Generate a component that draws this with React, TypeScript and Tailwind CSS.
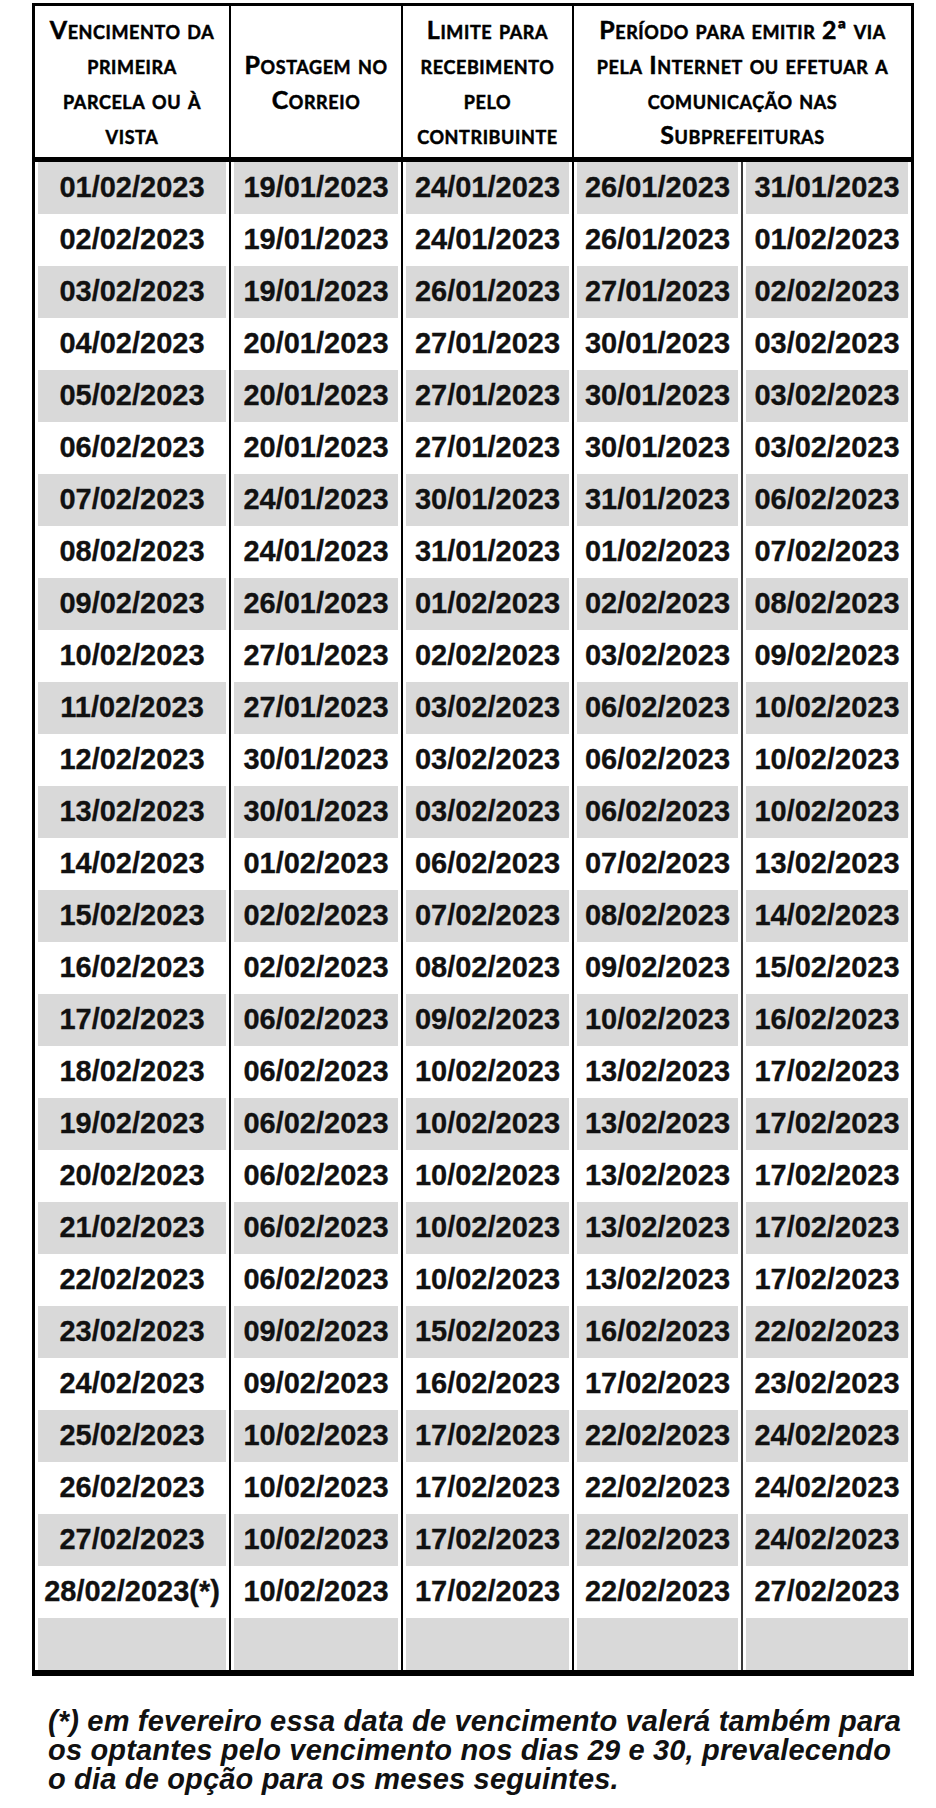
const rows: string[][] = [
  ["01/02/2023", "19/01/2023", "24/01/2023", "26/01/2023", "31/01/2023"],
  ["02/02/2023", "19/01/2023", "24/01/2023", "26/01/2023", "01/02/2023"],
  ["03/02/2023", "19/01/2023", "26/01/2023", "27/01/2023", "02/02/2023"],
  ["04/02/2023", "20/01/2023", "27/01/2023", "30/01/2023", "03/02/2023"],
  ["05/02/2023", "20/01/2023", "27/01/2023", "30/01/2023", "03/02/2023"],
  ["06/02/2023", "20/01/2023", "27/01/2023", "30/01/2023", "03/02/2023"],
  ["07/02/2023", "24/01/2023", "30/01/2023", "31/01/2023", "06/02/2023"],
  ["08/02/2023", "24/01/2023", "31/01/2023", "01/02/2023", "07/02/2023"],
  ["09/02/2023", "26/01/2023", "01/02/2023", "02/02/2023", "08/02/2023"],
  ["10/02/2023", "27/01/2023", "02/02/2023", "03/02/2023", "09/02/2023"],
  ["11/02/2023", "27/01/2023", "03/02/2023", "06/02/2023", "10/02/2023"],
  ["12/02/2023", "30/01/2023", "03/02/2023", "06/02/2023", "10/02/2023"],
  ["13/02/2023", "30/01/2023", "03/02/2023", "06/02/2023", "10/02/2023"],
  ["14/02/2023", "01/02/2023", "06/02/2023", "07/02/2023", "13/02/2023"],
  ["15/02/2023", "02/02/2023", "07/02/2023", "08/02/2023", "14/02/2023"],
  ["16/02/2023", "02/02/2023", "08/02/2023", "09/02/2023", "15/02/2023"],
  ["17/02/2023", "06/02/2023", "09/02/2023", "10/02/2023", "16/02/2023"],
  ["18/02/2023", "06/02/2023", "10/02/2023", "13/02/2023", "17/02/2023"],
  ["19/02/2023", "06/02/2023", "10/02/2023", "13/02/2023", "17/02/2023"],
  ["20/02/2023", "06/02/2023", "10/02/2023", "13/02/2023", "17/02/2023"],
  ["21/02/2023", "06/02/2023", "10/02/2023", "13/02/2023", "17/02/2023"],
  ["22/02/2023", "06/02/2023", "10/02/2023", "13/02/2023", "17/02/2023"],
  ["23/02/2023", "09/02/2023", "15/02/2023", "16/02/2023", "22/02/2023"],
  ["24/02/2023", "09/02/2023", "16/02/2023", "17/02/2023", "23/02/2023"],
  ["25/02/2023", "10/02/2023", "17/02/2023", "22/02/2023", "24/02/2023"],
  ["26/02/2023", "10/02/2023", "17/02/2023", "22/02/2023", "24/02/2023"],
  ["27/02/2023", "10/02/2023", "17/02/2023", "22/02/2023", "24/02/2023"],
  ["28/02/2023(*)", "10/02/2023", "17/02/2023", "22/02/2023", "27/02/2023"],
  ["", "", "", "", ""],
];

// larguras já contando a linha divisória à direita de cada coluna
const cellClasses = [
  "w-[196px] border-r-2 border-black",
  "w-[172px] border-r-2 border-black",
  "w-[171px] border-r-2 border-black",
  "w-[169px] border-r-2 border-[#3a3a3a]",
  "w-[168px]",
];

const headClass =
  "flex items-center justify-center text-center font-['Lato',sans-serif] font-bold text-[25px] leading-[35px] tracking-[0.6px] [font-variant:small-caps] [-webkit-text-stroke:0.5px_black] text-black whitespace-nowrap";

export default function App() {
  return (
    <div className="min-h-[1808px] bg-white pt-[3px]">
      <div className="ml-[32px] w-[882px] border-x-[3px] border-t-[3px] border-b-[6px] border-black">
        <div className="flex h-[156px] border-b-[5px] border-black">
          <div className={`${headClass} w-[196px] border-r-2 border-black`}>
            <span>
              Vencimento da
              <br />
              primeira
              <br />
              parcela ou à
              <br />
              vista
            </span>
          </div>
          <div className={`${headClass} w-[172px] border-r-2 border-black`}>
            <span>
              Postagem no
              <br />
              Correio
            </span>
          </div>
          <div className={`${headClass} w-[171px] border-r-2 border-black`}>
            <span>
              Limite para
              <br />
              recebimento
              <br />
              pelo
              <br />
              contribuinte
            </span>
          </div>
          <div className={`${headClass} w-[337px]`}>
            <span>
              Período para emitir 2ª via
              <br />
              pela Internet ou efetuar a
              <br />
              comunicação nas
              <br />
              Subprefeituras
            </span>
          </div>
        </div>

        {rows.map((row, i) => (
          <div key={i} className="flex h-[52px]">
            {row.map((value, j) => (
              <div key={j} className={`${cellClasses[j]} h-full px-[3px]`}>
                <div
                  className={`flex h-full items-center justify-center whitespace-nowrap font-['Liberation_Sans',Arial,sans-serif] text-[29px] font-bold text-[#111] [-webkit-text-stroke:0.3px_#111] ${
                    i % 2 === 0 ? "bg-[#d9d9d9]" : "bg-white"
                  }`}
                >
                  {value}
                </div>
              </div>
            ))}
          </div>
        ))}
      </div>

      <p className="ml-[48px] mt-[31px] whitespace-nowrap font-['Liberation_Sans',Arial,sans-serif] text-[29px] font-bold italic leading-[29px] tracking-[0.17px] text-[#111]">
        (*) em fevereiro essa data de vencimento valerá também para
        <br />
        os optantes pelo vencimento nos dias 29 e 30, prevalecendo
        <br />o dia de opção para os meses seguintes.
      </p>
    </div>
  );
}
